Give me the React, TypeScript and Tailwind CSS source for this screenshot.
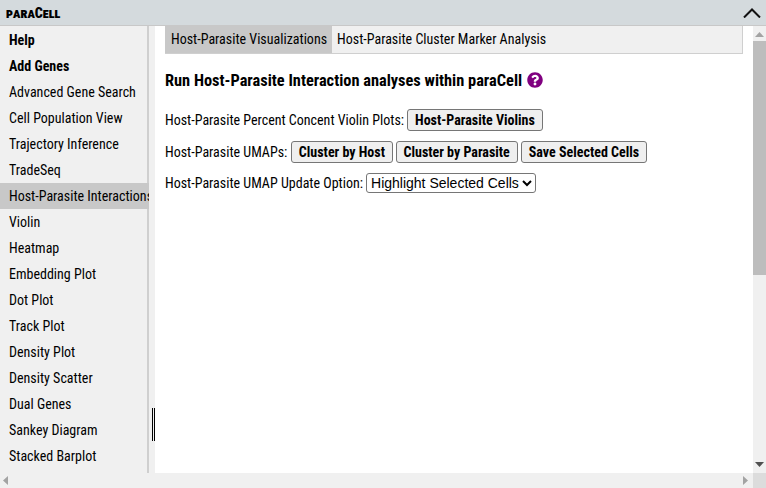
import React from 'react';
import { FaQuestionCircle } from 'react-icons/fa';

const menuItems = [
  'Advanced Gene Search',
  'Cell Population View',
  'Trajectory Inference',
  'TradeSeq',
  'Host-Parasite Interactions',
  'Violin',
  'Heatmap',
  'Embedding Plot',
  'Dot Plot',
  'Track Plot',
  'Density Plot',
  'Density Scatter',
  'Dual Genes',
  'Sankey Diagram',
  'Stacked Barplot',
];

const btn =
  'h-[22px] px-[7px] rounded-[3px] border border-[#767676] bg-[#efefef] text-[14px] font-bold text-black leading-none whitespace-nowrap';

const App: React.FC = () => {
  return (
    <div className="w-[766px] h-[488px] overflow-hidden flex flex-col bg-[#f0f0f0] text-black font-['Roboto',sans-serif] [font-stretch:75%] text-[14px]">
      <header className="h-[26px] shrink-0 bg-[#d4dadd] border-b border-[#c8c8c8] flex items-center justify-between pl-[6px] pr-[5px]">
        <span className="font-black text-[14px] [font-variant:small-caps] leading-none">paraCell</span>
        <svg width="18" height="10" viewBox="0 0 18 10" fill="none" stroke="#111" strokeWidth="2">
          <path d="M1 9.5 L9 1.5 L17 9.5" />
        </svg>
      </header>

      <div className="flex-1 flex min-h-0">
        <nav className="w-[149px] shrink-0 shadow-[inset_-2px_0_0_#cfcfcf] overflow-hidden">
          <ul className="pt-px">
            <li className="h-[26px] pl-[9px] flex items-center font-bold whitespace-nowrap">Help</li>
            <li className="h-[26px] pl-[9px] flex items-center font-bold whitespace-nowrap">Add Genes</li>
            {menuItems.map(item => (
              <li
                key={item}
                className={`h-[26px] pl-[9px] flex items-center whitespace-nowrap ${item === 'Host-Parasite Interactions' ? 'bg-[#c8c8c8]' : ''}`}
              >
                {item}
              </li>
            ))}
          </ul>
        </nav>

        <div className="w-[6px] shrink-0 relative bg-[#f0f0f0]">
          <div className="absolute left-[3px] top-[382px] w-[3px] h-[33px] border-x border-black" />
        </div>

        <main className="flex-1 min-w-0 bg-white flex flex-col">
          <div className="flex-1 min-h-0 pl-[10px] pr-[10px]">
            <div className="h-[28px] flex items-stretch bg-[#f0f0f0] border-b border-r border-[#cfcfcf]">
              <div className="bg-[#c8c8c8] pl-[6px] pr-[5px] flex items-center whitespace-nowrap">Host-Parasite Visualizations</div>
              <div className="px-[5px] flex items-center whitespace-nowrap">Host-Parasite Cluster Marker Analysis</div>
            </div>
            <h2 className="mt-[17px] h-[20px] flex items-center gap-[5px] text-[16.38px] font-bold whitespace-nowrap">
              Run Host-Parasite Interaction analyses within paraCell
              <FaQuestionCircle className="-mt-[3px] text-[#800080]" size={16} />
            </h2>
            <div className="mt-[18px] h-[22px] flex items-center gap-[3px] whitespace-nowrap">
              <span>Host-Parasite Percent Concent Violin Plots:</span>
              <button className={btn}>Host-Parasite Violins</button>
            </div>
            <div className="mt-[10px] h-[22px] flex items-center gap-[3px] whitespace-nowrap">
              <span className="mr-[0.5px]">Host-Parasite UMAPs:</span>
              <button className={`${btn} -mr-[0.5px]`}>Cluster by Host</button>
              <button className={btn}>Cluster by Parasite</button>
              <button className={btn}>Save Selected Cells</button>
            </div>
            <div className="mt-[10px] h-[20px] flex items-center gap-[3px] whitespace-nowrap">
              <span>Host-Parasite UMAP Update Option:</span>
              <select className="h-[20px] w-[170px] rounded-[3px] border border-[#767676] bg-white text-[14px] font-['Liberation_Sans',sans-serif] [font-stretch:100%] [appearance:auto]" defaultValue="Highlight Selected Cells">
                <option>Highlight Selected Cells</option>
              </select>
            </div>
          </div>
        </main>

        <div className="w-[13px] shrink-0 bg-[#f0f0f0] flex flex-col items-center">
          <svg className="mt-[6px] shrink-0" width="9" height="5" viewBox="0 0 9 5" fill="#a3a3a3"><path d="M4.5 0 L9 5 H0 Z" /></svg>
          <div className="mt-[4px] w-full h-[234px] bg-[#bdbdbd]" />
          <div className="flex-1" />
          <svg className="mb-[6px] shrink-0" width="9" height="5" viewBox="0 0 9 5" fill="#505050"><path d="M0 0 H9 L4.5 5 Z" /></svg>
        </div>
      </div>

      <div className="h-[15px] shrink-0 flex items-center bg-[#f0f0f0]">
        <svg className="ml-[3px] shrink-0" width="5" height="9" viewBox="0 0 5 9" fill="#a3a3a3"><path d="M5 0 V9 L0 4.5 Z" /></svg>
        <div className="flex-1" />
        <svg className="mr-[5px] shrink-0" width="5" height="9" viewBox="0 0 5 9" fill="#a3a3a3"><path d="M0 0 V9 L5 4.5 Z" /></svg>
        <div className="w-[13px] h-full bg-[#dcdcdc]" />
      </div>
    </div>
  );
};

export default App;
